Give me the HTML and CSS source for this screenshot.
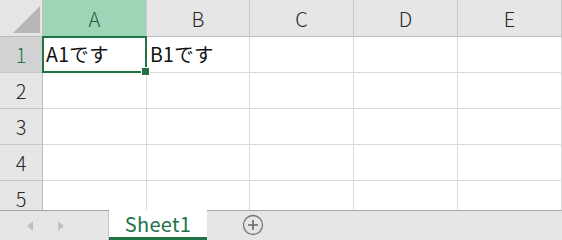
FILE: index.html
```html
<!DOCTYPE html>
<html lang="ja">
<head>
<meta charset="utf-8">
<link rel="stylesheet" href="styles.css">
</head>
<body>
<div class="app">
  <div class="grid">
    <div class="corner"><svg width="43" height="37" viewBox="0 0 43 37"><polygon points="13,33 40,33 40,6" fill="#b7b7b7"/></svg></div>
    <div class="colhead sel">A</div>
    <div class="colhead">B</div>
    <div class="colhead">C</div>
    <div class="colhead">D</div>
    <div class="colhead">E</div>

    <div class="rowhead sel">1</div>
    <div class="cell active">A1です</div>
    <div class="cell">B1です</div>
    <div class="cell"></div>
    <div class="cell"></div>
    <div class="cell"></div>

    <div class="rowhead">2</div>
    <div class="cell"></div><div class="cell"></div><div class="cell"></div><div class="cell"></div><div class="cell"></div>

    <div class="rowhead">3</div>
    <div class="cell"></div><div class="cell"></div><div class="cell"></div><div class="cell"></div><div class="cell"></div>

    <div class="rowhead">4</div>
    <div class="cell"></div><div class="cell"></div><div class="cell"></div><div class="cell"></div><div class="cell"></div>

    <div class="rowhead">5</div>
    <div class="cell"></div><div class="cell"></div><div class="cell"></div><div class="cell"></div><div class="cell"></div>
  </div>
  <div class="tabbar">
    <div class="nav">
      <span class="arrow left"></span>
      <span class="arrow right"></span>
    </div>
    <div class="tab">Sheet1</div>
    <div class="add">
      <svg width="22" height="22" viewBox="0 0 22 22"><circle cx="11" cy="11" r="9.5" fill="none" stroke="#777" stroke-width="1.3"/><path d="M11 6v10M6 11h10" stroke="#666" stroke-width="1.6"/></svg>
    </div>
  </div>
</div>
</body>
</html>
```

FILE: styles.css
```css
* { box-sizing: border-box; }
html, body { margin: 0; padding: 0; background: #fff; }
.app {
  width: 562px;
  height: 240px;
  overflow: hidden;
  font-family: "Noto Sans CJK JP", "Noto Sans", sans-serif;
}
.grid {
  display: grid;
  grid-template-columns: 43px 104px 103px 104px 104px 104px;
  grid-template-rows: 37px repeat(5, 36px);
  height: 210px;
  overflow: hidden;
}
.corner {
  background: #e6e6e6;
  border-right: 1px solid #bdbdbd;
  border-bottom: 1px solid #bdbdbd;
  line-height: 0;
}
.colhead {
  background: #e6e6e6;
  border-right: 1px solid #c8c8c8;
  border-bottom: 1px solid #bdbdbd;
  display: flex;
  align-items: center;
  justify-content: center;
  font-size: 20px;
  color: #262626;
  font-family: "Noto Sans CJK JP", sans-serif;
  font-weight: 300;
  padding-top: 1px;
}
.colhead.sel {
  background: #9fd5b7;
  color: #1e5f3c;
  border-bottom: 1px solid #217346;
}
.rowhead {
  background: #e6e6e6;
  border-right: 1px solid #bdbdbd;
  border-bottom: 1px solid #c8c8c8;
  display: flex;
  align-items: center;
  justify-content: center;
  font-size: 20px;
  color: #262626;
  font-family: "Noto Sans CJK JP", sans-serif;
  font-weight: 300;
}
.rowhead.sel {
  background: #d2d2d2;
  color: #217346;
  border-right: 1px solid #217346;
}
.cell {
  border-right: 1px solid #d9d9d9;
  border-bottom: 1px solid #d9d9d9;
  font-size: 19.5px;
  color: #111;
  padding: 2px 0 0 3px;
  line-height: 29px;
  white-space: nowrap;
  letter-spacing: 0.3px;
}
.cell.active {
  position: relative;
}
.cell.active::before {
  content: "";
  position: absolute;
  left: -1px;
  top: -1px;
  right: -1px;
  bottom: -1px;
  border: 2px solid #217346;
}
.cell.active::after {
  content: "";
  position: absolute;
  right: -4px;
  bottom: -4px;
  width: 7px;
  height: 7px;
  background: #217346;
  border: 1px solid #fff;
}
.tabbar {
  height: 30px;
  display: flex;
  background: #e6e6e6;
  border-top: 1px solid #a6a6a6;
}
.nav {
  width: 109px;
  display: flex;
  align-items: center;
  gap: 22px;
  padding-left: 27px;
  border-right: 1px solid #c6c6c6;
}
.arrow {
  width: 0;
  height: 0;
  border-top: 5px solid transparent;
  border-bottom: 5px solid transparent;
}
.arrow.left { border-right: 6px solid #c0c0c0; }
.arrow.right { border-left: 6px solid #c0c0c0; margin-left: 3px; }
.tab {
  width: 98px;
  margin-top: -1px;
  background: #fff;
  border-bottom: 3px solid #217346;
  color: #217346;
  font-family: "Noto Sans CJK JP", sans-serif;
  font-size: 20px;
  display: flex;
  align-items: center;
  justify-content: center;
  line-height: 1;
  padding-top: 1px;
  letter-spacing: 0.3px;
}
.add {
  margin-left: 35px;
  display: flex;
  align-items: center;
  padding-bottom: 1px;
}
```
